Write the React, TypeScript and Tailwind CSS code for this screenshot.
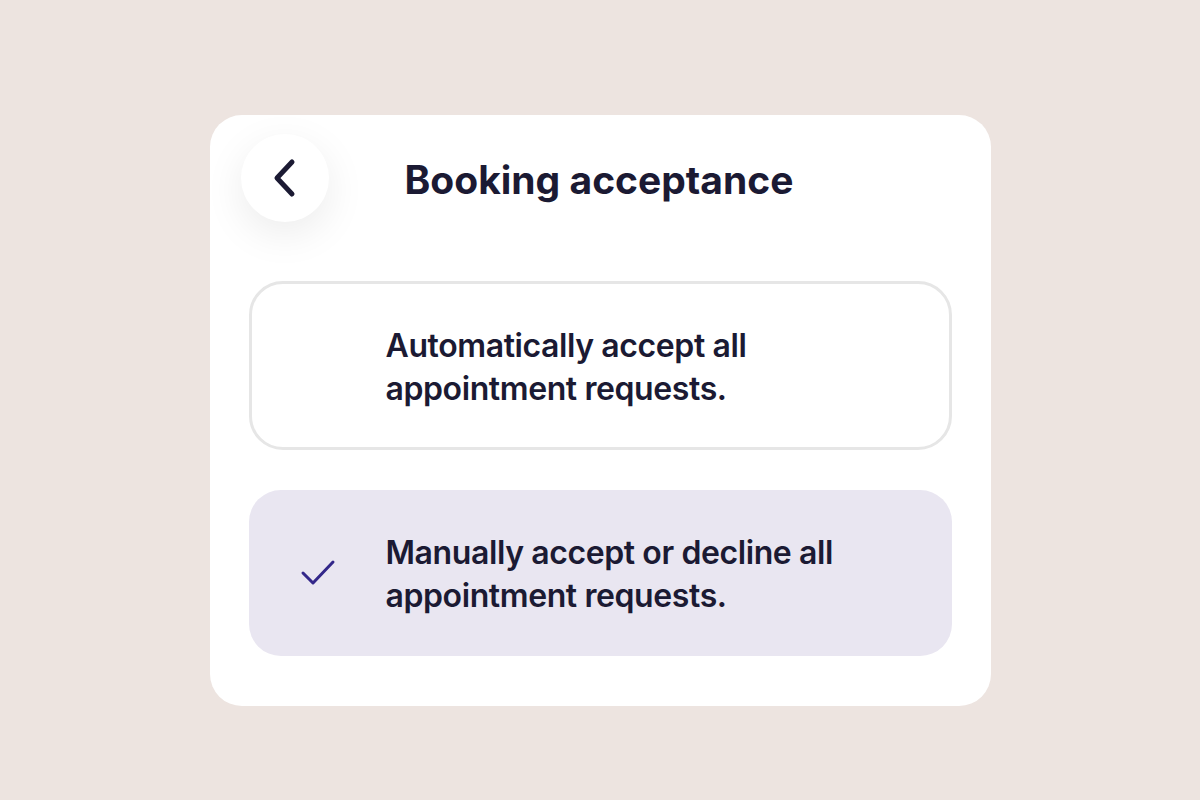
import React from "react";

export default function App() {
  return (
    <div className="w-[1200px] h-[800px] bg-[#ede4e0] flex items-start justify-center pt-[115px]" style={{ fontFamily: "Inter, 'Liberation Sans', sans-serif" }}>
      <div className="w-[781px] h-[591px] bg-white rounded-[32px] pt-[19px] px-[39px] flex flex-col">
        <div className="flex items-center h-[88px] -ml-[8px]">
          <div className="w-[88px] h-[88px] rounded-full bg-white shadow-[0_12px_40px_rgba(0,0,0,0.08)] flex items-center justify-center">
            <svg width="30" height="42" viewBox="0 0 30 42" fill="none">
              <path d="M22 5 L7 21 L22 37" stroke="#1b1a33" strokeWidth="5" strokeLinecap="round" strokeLinejoin="round" />
            </svg>
          </div>
          <h1 className="ml-[76px] mt-[5px] text-[39px] font-bold text-[#1b1a33] tracking-[0px]">Booking acceptance</h1>
        </div>
        <div className="mt-[59px] h-[169px] rounded-[34px] border-[3px] border-[#e6e6e6] flex items-center pl-[134px]">
          <p className="mt-[2px] text-[32px] leading-[43px] font-semibold text-[#1b1a33] tracking-[-0.4px]">
            Automatically accept all<br />appointment requests.
          </p>
        </div>
        <div className="mt-[40px] h-[166px] rounded-[32px] bg-[#e9e6f1] flex items-center">
          <div className="w-[139px] flex justify-center">
            <svg width="36" height="28" viewBox="0 0 36 28" fill="none">
              <path d="M3 14 L13 24 L33 3" stroke="#33278a" strokeWidth="3" strokeLinecap="round" strokeLinejoin="round" />
            </svg>
          </div>
          <p className="-ml-[2px] mt-[2px] text-[32px] leading-[43px] font-semibold text-[#1b1a33] tracking-[-0.4px]">
            Manually accept or decline all<br />appointment requests.
          </p>
        </div>
      </div>
    </div>
  );
}
